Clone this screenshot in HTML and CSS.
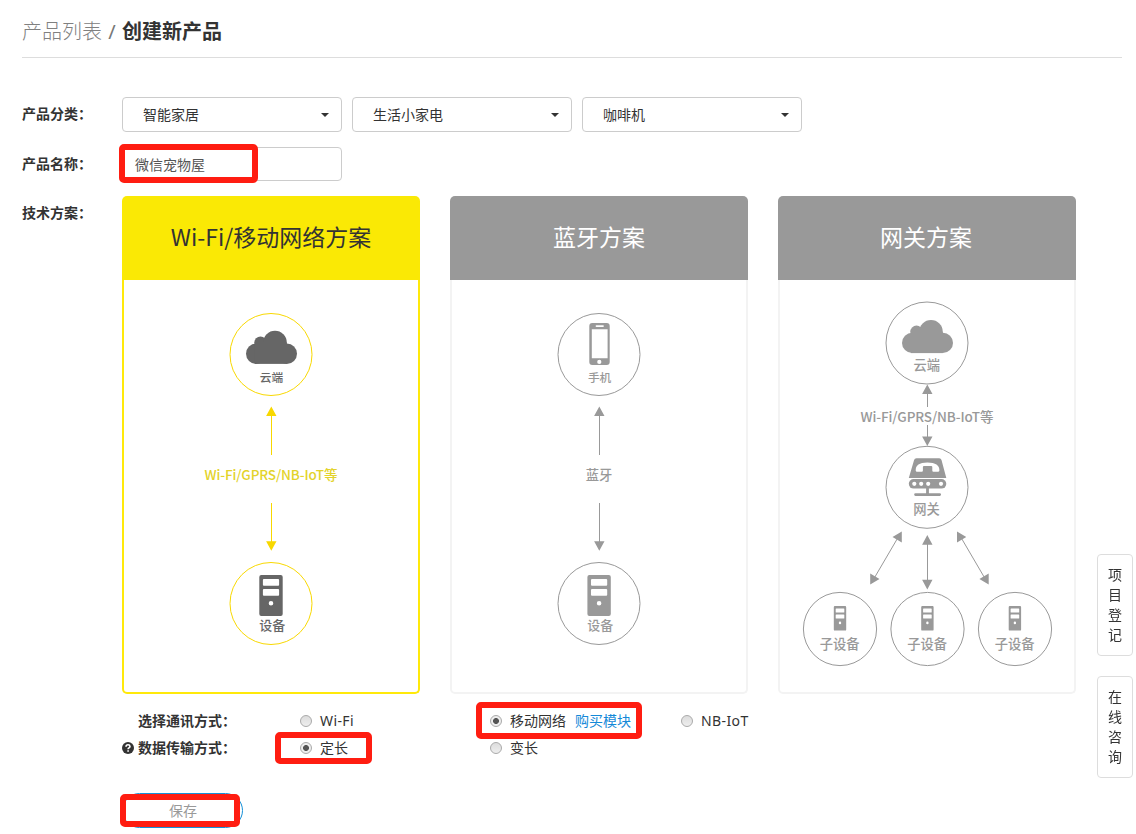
FILE: index.html
```html
<!DOCTYPE html>
<html lang="zh-CN">
<head>
<meta charset="utf-8">
<title>创建新产品</title>
<link rel="stylesheet" href="styles.css">
</head>
<body>
<svg class="defs" width="0" height="0">
  <defs>
    <g id="cloud">
      <circle cx="10.2" cy="23.1" r="10.2"/><circle cx="14.5" cy="12" r="6.2"/>
      <circle cx="29" cy="12" r="11.8"/><circle cx="40.8" cy="23.1" r="10.2"/>
      <rect x="8.8" y="12" width="32" height="21.3"/>
    </g>
    <path id="server" fill-rule="evenodd" d="M2 0H21.4a2 2 0 0 1 2 2V39a2 2 0 0 1-2 2H2a2 2 0 0 1-2-2V2a2 2 0 0 1 2-2ZM4.6 4a1 1 0 0 0-1 1v4.8a1 1 0 0 0 1 1H18.8a1 1 0 0 0 1-1V5a1 1 0 0 0-1-1ZM4.6 14a1 1 0 0 0-1 1v4.8a1 1 0 0 0 1 1H18.8a1 1 0 0 0 1-1V15a1 1 0 0 0-1-1ZM11.7 25.9a2.3 2.3 0 1 0 0 4.6a2.3 2.3 0 1 0 0-4.6Z"/>
  </defs>
</svg>
<main class="page">
  <h1 class="crumbs"><span class="crumb-link">产品列表</span><span class="crumb-sep">/</span><b>创建新产品</b></h1>

  <div class="row row-category">
    <span class="label">产品分类：</span>
    <div class="selects">
      <div class="select">智能家居<i class="caret"></i></div>
      <div class="select">生活小家电<i class="caret"></i></div>
      <div class="select">咖啡机<i class="caret"></i></div>
    </div>
  </div>

  <div class="row row-name">
    <span class="label">产品名称：</span>
    <div class="input">微信宠物屋<i class="mark mark-name"></i></div>
  </div>

  <div class="row row-plan">
    <span class="label">技术方案：</span>
    <div class="cards">
      <section class="card card-active">
        <h2 class="card-head">Wi-Fi/移动网络方案</h2>
        <svg class="diagram" viewBox="124 280 294 412" width="294" height="412">
          <g class="ring"><circle cx="271" cy="354.5" r="41"/><circle cx="271" cy="603.5" r="41"/><path d="M271.5 414V455M271.5 503V543"/></g>
          <path class="tip" d="M271.3 406.5L276.5 416H266.1ZM271.3 550.7L276.5 541.2H266.1Z"/>
          <use href="#cloud" x="246" y="330.6"/>
          <use href="#server" x="259.3" y="575"/>
          <text x="271.5" y="381.5" font-size="11.7">云端</text>
          <text class="link-text" x="271" y="479.5" font-size="13.5" textLength="133">Wi-Fi/GPRS/NB-IoT等</text>
          <text x="272.3" y="630.4" font-size="13">设备</text>
        </svg>
      </section>
      <section class="card">
        <h2 class="card-head">蓝牙方案</h2>
        <svg class="diagram" viewBox="452 280 294 412" width="294" height="412">
          <g class="ring"><circle cx="599" cy="354.5" r="41"/><circle cx="599" cy="603.5" r="41"/><path d="M599.5 414V455M599.5 503V543"/></g>
          <path class="tip" d="M599.3 406.5L604.5 416H594.1ZM599.3 550.7L604.5 541.2H594.1Z"/>
          <path fill-rule="evenodd" d="M592.3 323H606.7a3 3 0 0 1 3 3V362a3 3 0 0 1-3 3H592.3a3 3 0 0 1-3-3V326a3 3 0 0 1 3-3ZM591.8 329.2V358.3H607.6V329.2ZM596.5 325.2a.9.9 0 0 0 0 1.8H603a.9.9 0 0 0 0-1.8ZM599.3 359.8a2.1 2.1 0 1 0 0 4.2a2.1 2.1 0 1 0 0-4.2Z"/>
          <use href="#server" x="587.4" y="575"/>
          <text x="599.6" y="381.5" font-size="11.7">手机</text>
          <text x="599" y="479.5" font-size="13.3">蓝牙</text>
          <text x="600.3" y="630.4" font-size="13">设备</text>
        </svg>
      </section>
      <section class="card">
        <h2 class="card-head card-head-gateway">网关方案</h2>
        <svg class="diagram" viewBox="780 280 294 412" width="294" height="412">
          <g class="ring">
            <circle cx="927" cy="343" r="41"/><circle cx="927" cy="487.3" r="41"/>
            <circle cx="840" cy="629" r="36.6"/><circle cx="927.5" cy="629" r="36.6"/><circle cx="1015" cy="629" r="36.6"/>
            <path d="M927.5 392V407M927.5 425V438M927.5 543V581M898 537.5L874 578.5M961 537.5L985 578.5"/>
          </g>
          <path class="tip" d="M927.3 384.5L932.5 394H922.1ZM927.3 446L932.5 436.5H922.1ZM927.3 535L932.5 544.7H922.1ZM927.3 589.5L932.5 579.8H922.1ZM901.8 531.5V542.5L892.5 537ZM870.2 584.5V573.5L879.5 579ZM957 531.5V542.5L966.3 537ZM988.7 584.5V573.5L979.4 579Z"/>
          <use href="#cloud" x="902" y="319.8"/>
          <path d="M916.5 458.3H939.2Q941 458.3 941.5 460L946.3 478H908.8L914.1 460Q914.6 458.3 916.5 458.3Z"/>
          <path class="hole" d="M915.7 470.4Q915.3 462.4 927.4 462.4Q939.6 462.4 939.4 470.4Q939.3 471.7 938 471.7H933.4Q932.3 471.7 932.3 470.5V467Q932.3 466 931.2 466H924Q922.9 466 922.9 467V470.5Q922.9 471.7 921.8 471.7H917Q915.8 471.7 915.7 470.4Z"/>
          <rect x="908.8" y="479" width="37.5" height="9.6" rx="4.8"/>
          <g class="hole"><circle cx="914.3" cy="483.8" r="2.1"/><circle cx="921.2" cy="483.8" r="2.1"/><circle cx="928.2" cy="483.8" r="2.1"/><circle cx="941" cy="483.8" r="2.1"/></g>
          <path d="M926.1 488H928.9V493.2H939.7a1.3 1.3 0 0 1 0 2.7H915.5a1.3 1.3 0 0 1 0-2.7H926.1Z"/>
          <use href="#server" transform="translate(833.8 606) scale(.53 .6)"/>
          <use href="#server" transform="translate(921.2 606) scale(.53 .6)"/>
          <use href="#server" transform="translate(1008.7 606) scale(.53 .6)"/>
          <text x="926.7" y="370" font-size="13.3">云端</text>
          <text x="927" y="421.6" font-size="13.5" textLength="133">Wi-Fi/GPRS/NB-IoT等</text>
          <text x="926.5" y="514" font-size="13.3">网关</text>
          <text x="839.7" y="649.4" font-size="13.3">子设备</text><text x="927.2" y="649.4" font-size="13.3">子设备</text><text x="1014.7" y="649.4" font-size="13.3">子设备</text>
        </svg>
      </section>
    </div>
  </div>

  <div class="options">
    <span class="opt-label">选择通讯方式：</span>
    <label class="opt"><i class="radio"></i><span class="latin">Wi-Fi</span></label>
    <label class="opt"><i class="radio on"></i>移动网络<a class="buy">购买模块</a><i class="mark mark-net"></i></label>
    <label class="opt"><i class="radio"></i><span class="latin">NB-IoT</span></label>
    <span class="opt-label"><svg class="help" viewBox="0 0 12 12" width="12" height="12"><circle cx="6" cy="6" r="6"/><path d="M4 4.7Q4.1 2.8 6 2.8T8 4.5Q8 5.5 6.8 6Q6.1 6.3 6.1 7.2M6.1 8.2V9.8"/></svg>数据传输方式：</span>
    <label class="opt"><i class="radio on"></i>定长<i class="mark mark-fixed"></i></label>
    <label class="opt"><i class="radio"></i>变长</label>
  </div>

  <div class="save">保存<i class="mark mark-save"></i></div>
</main>
<aside class="side">
  <div class="side-item">项目登记</div>
  <div class="side-item">在线咨询</div>
</aside>
</body>
</html>
```

FILE: styles.css
```css
* { box-sizing: border-box; }
body {
  margin: 0;
  height: 834px;
  overflow: hidden;
  background: #fff;
  color: #333;
  font: 14px/20px "Noto Sans", "Noto Sans CJK SC", sans-serif;
}
i { font-style: normal; }
.defs { position: absolute; }
.page { padding: 0 14px 0 22px; }

.crumbs {
  display: flex;
  margin: 0;
  height: 58px;
  padding-top: 17px;
  border-bottom: 1px solid #ddd;
  font-size: 20px;
  line-height: 30px;
  font-weight: 400;
}
.crumb-link { color: #808080; font-weight: 300; }
.crumb-sep { width: 20px; text-align: center; color: #777; }

.row { display: flex; }
.label { width: 100px; flex: none; font-weight: 700; }
.row-category { margin-top: 39px; height: 50px; }
.row-category .label, .row-name .label { padding-top: 7px; }
.selects { display: flex; gap: 10px; }
.select {
  display: flex;
  justify-content: space-between;
  align-items: center;
  width: 220px;
  height: 35px;
  padding: 0 12px 0 20px;
  border: 1px solid #ccc;
  border-radius: 4px;
}
.caret { border: 4px solid transparent; border-top-color: #333; border-bottom: 0; }

.row-name { height: 49px; }
.input {
  position: relative;
  width: 220px;
  height: 34px;
  padding: 7px 12px;
  border: 1px solid #ccc;
  border-radius: 4px;
  color: #555;
}
.row-plan .label { padding-top: 7px; }
.cards { display: flex; gap: 30px; }
.card { width: 298px; color: #999; }
.card-head {
  margin: 0;
  height: 84px;
  border-radius: 5px 5px 0 0;
  background: #999;
  color: #fff;
  text-align: center;
  font: 400 23px/81px "Noto Sans CJK SC", sans-serif;
}
.card-head-gateway { padding-right: 2px; }
.diagram {
  display: block;
  box-sizing: content-box;
  border: 2px solid #f3f3f3;
  border-top: 0;
  border-radius: 0 0 5px 5px;
  fill: #999;
  font-family: "Noto Sans CJK SC", sans-serif;
  font-weight: 500;
  text-anchor: middle;
}
.ring { fill: none; stroke: #999; stroke-width: 1; }
.hole { fill: #fff; }
.card-active .card-head { background: #fae905; color: #333; }
.card-active .diagram { border-color: #ffe90a; fill: #666; }
.card-active .ring { stroke: #f8d800; }
.card-active .tip { fill: #f8d800; }
.card-active .link-text { fill: #e3d32b; }

.options {
  display: grid;
  grid-template-columns: 178px 190px 191px 120px;
  grid-auto-rows: 27px;
  margin: 13px 0 0 100px;
}
.opt-label { display: flex; justify-content: flex-start; align-items: center; padding-left: 16px; font-weight: 700; }
.help { margin: 0 4px 0 -16px; fill: #333; }
.help path { fill: none; stroke: #fff; stroke-width: 1.6; }
.opt { position: relative; display: flex; align-items: center; }
.latin { letter-spacing: .4px; }
.radio {
  width: 12px;
  height: 12px;
  margin-right: 8px;
  border: 1px solid #aaa;
  border-radius: 50%;
  background: linear-gradient(#dcdcdc, #eee);
}
.radio.on { background: radial-gradient(circle, #555 0 2.6px, #eee 3.3px); }
.buy { margin-left: 9px; color: #1489d8; }

.save {
  position: relative;
  width: 121px;
  height: 35px;
  margin: 32px 0 0 100px;
  padding-left: 1px;
  border: 1px solid #1590d8;
  border-radius: 18px;
  color: #999;
  line-height: 34px;
  text-align: center;
}

.mark { position: absolute; border: 6px solid #ff1d11; border-radius: 5px; }
.mark-name { left: -4px; top: -4px; width: 139px; height: 39px; }
.mark-net { left: -14px; top: -5px; width: 166px; height: 37px; }
.mark-fixed { left: -25px; top: -2px; width: 97px; height: 32px; }
.mark-save { left: -3px; top: 0; width: 120px; height: 33px; }

.side { position: fixed; right: 3px; top: 554px; display: grid; gap: 20px; }
.side-item {
  width: 36px;
  height: 102px;
  padding: 10px;
  border: 1px solid #ddd;
  border-radius: 4px;
  word-break: break-all;
}
```
